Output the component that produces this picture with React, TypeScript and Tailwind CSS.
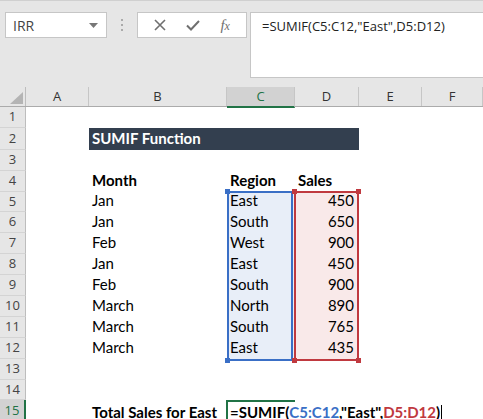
import React from "react";

const COLS = [63, 138, 68, 64, 63, 61];
const LETTERS = ["A", "B", "C", "D", "E", "F"];
const ROWH = [21, 22, 21, 21, 20, 21, 21, 21, 21, 21, 21, 21, 21, 20, 24];

const data: [string, string, string][] = [
  ["Jan", "East", "450"],
  ["Jan", "South", "650"],
  ["Feb", "West", "900"],
  ["Jan", "East", "450"],
  ["Feb", "South", "900"],
  ["March", "North", "890"],
  ["March", "South", "765"],
  ["March", "East", "435"],
];

const cellFont = { fontFamily: "Lato, 'Liberation Sans', sans-serif" };
const uiFont = { fontFamily: "'Open Sans', 'Noto Sans', sans-serif" };

function Row({ n, children }: { n: number; children?: React.ReactNode }) {
  const sel = n === 15;
  return (
    <div className="flex" style={{ height: ROWH[n - 1] }}>
      <div
        className={
          "w-[26px] shrink-0 flex items-center justify-center text-[13px] border-b border-[#d4d4d4] " +
          (sel
            ? "bg-[#d2d2d2] text-[#217346] border-r-2 border-r-[#217346] items-start pt-[1px]"
            : "bg-[#e6e6e6] text-[#444] border-r border-r-[#bdbdbd]")
        }
        style={uiFont}
      >
        {n}
      </div>
      <div className="flex-1 flex relative">{children}</div>
    </div>
  );
}

function Cell({
  w,
  children,
  className = "",
}: {
  w: number;
  children?: React.ReactNode;
  className?: string;
}) {
  return (
    <div
      className={"shrink-0 flex items-end pb-[1px] px-[3px] text-[15px] text-black whitespace-nowrap " + className}
      style={{ width: w, ...cellFont }}
    >
      {children}
    </div>
  );
}

export default function App() {
  return (
    <div className="w-[483px] h-[419px] overflow-hidden bg-white relative">
      {/* Toolbar */}
      <div className="h-[87px] bg-[#e6e6e6] border-t border-[#d0d0d0] flex items-start pt-[11px]">
        <div
          className="ml-[5px] w-[102px] h-[26px] bg-white border border-[#c6c6c6] flex items-center justify-between pl-[7px] pr-[8px] text-[14px] text-[#444]"
          style={uiFont}
        >
          <span>IRR</span>
          <svg width="9" height="5" viewBox="0 0 9 5">
            <path d="M0 0 L9 0 L4.5 5 Z" fill="#777" />
          </svg>
        </div>
        <div className="w-[30px] h-[26px] flex flex-col items-center justify-center gap-[3px]">
          <div className="w-[2px] h-[2px] bg-[#aaa]" />
          <div className="w-[2px] h-[2px] bg-[#aaa]" />
          <div className="w-[2px] h-[2px] bg-[#aaa]" />
        </div>
        <div className="w-[110px] h-[26px] bg-white border border-[#c6c6c6] flex items-center justify-around px-[6px]">
          <svg width="12" height="12" viewBox="0 0 12 12">
            <path d="M1 1 L11 11 M11 1 L1 11" stroke="#6f6f6f" strokeWidth="1.6" />
          </svg>
          <svg width="14" height="11" viewBox="0 0 14 11">
            <path d="M1 5.5 L5 9.5 L13 1" stroke="#6f6f6f" strokeWidth="2" fill="none" />
          </svg>
          <span
            className="text-[15px] italic text-[#6f6f6f] leading-none"
            style={{ fontFamily: "'Liberation Serif', serif" }}
          >
            f<span className="text-[12px]">x</span>
          </span>
        </div>
        <div
          className="ml-[3px] flex-1 h-[66px] bg-white border border-[#c6c6c6] border-r-0 pl-[11px] pt-[4px] text-[13px] text-[#222]"
          style={uiFont}
        >
          =SUMIF(C5:C12,"East",D5:D12)
        </div>
      </div>

      {/* Column headers */}
      <div className="flex h-[20px] bg-[#e6e6e6] border-b border-[#ababab]">
        <div className="w-[26px] shrink-0 relative border-r border-[#bdbdbd]">
          <svg className="absolute left-[10px] top-[5px]" width="13" height="12" viewBox="0 0 13 12">
            <path d="M13 0 L13 12 L0 12 Z" fill="#b4b4b4" />
          </svg>
        </div>
        {LETTERS.map((l, i) => (
          <div
            key={l}
            className={
              "shrink-0 flex items-center justify-center text-[13px] border-r border-[#c6c6c6] " +
              (l === "C"
                ? "bg-[#d2d2d2] text-[#217346] border-b-2 border-b-[#217346] h-[21px]"
                : "text-[#333]")
            }
            style={{ width: COLS[i], ...uiFont }}
          >
            {l}
          </div>
        ))}
      </div>

      {/* Grid rows */}
      <div className="relative">
        <Row n={1} />
        <Row n={2}>
          <Cell w={COLS[0]} />
          <Cell
            w={COLS[1] + COLS[2] + COLS[3]}
            className="bg-[#333f4f] !text-white font-bold items-center pb-0"
          >
            SUMIF Function
          </Cell>
        </Row>
        <Row n={3} />
        <Row n={4}>
          <Cell w={COLS[0]} />
          <Cell w={COLS[1]} className="font-bold">Month</Cell>
          <Cell w={COLS[2]} className="font-bold">Region</Cell>
          <Cell w={COLS[3]} className="font-bold">Sales</Cell>
        </Row>
        {data.map(([m, r, s], i) => (
          <Row n={i + 5} key={i}>
            <Cell w={COLS[0]} />
            <Cell w={COLS[1]}>{m}</Cell>
            <Cell w={COLS[2]} className="bg-[#e8eef8]">{r}</Cell>
            <Cell w={COLS[3]} className="bg-[#f9e9e9] justify-end pr-[5px]">{s}</Cell>
          </Row>
        ))}
        <Row n={13} />
        <Row n={14} />
        <Row n={15}>
          <Cell w={COLS[0]} />
          <Cell w={COLS[1]} className="font-bold">Total Sales for East</Cell>
          <div
            className="shrink-0 flex items-end pb-[1px] pl-[2px] text-[15px] font-bold whitespace-nowrap border-t-2 border-l-2 border-[#217346] w-[69px] ml-[-1px] overflow-visible"
            style={cellFont}
          >
            <span className="flex items-end">
              <span>=SUMIF(</span>
              <span className="text-[#3a6fc6]">C5:C12</span>
              <span>,"East",</span>
              <span className="text-[#c0393f]">D5:D12</span>
              <span>)</span>
              <span className="inline-block w-[1px] h-[17px] bg-black ml-[1px] mb-[1px]" />
            </span>
          </div>
        </Row>

        {/* Range highlight borders */}
        <div className="absolute left-[227px] top-[84px] w-[66px] h-[170px] border-2 border-[#3a6fc6] pointer-events-none" />
        <div className="absolute left-[294px] top-[84px] w-[65px] h-[170px] border-2 border-[#c0393f] pointer-events-none" />
        <div className="absolute left-[225px] top-[82px] w-[5px] h-[5px] bg-[#3a6fc6]" />
        <div className="absolute left-[225px] top-[251px] w-[5px] h-[5px] bg-[#3a6fc6]" />
        <div className="absolute left-[292px] top-[82px] w-[5px] h-[5px] bg-[#c0393f]" />
        <div className="absolute left-[292px] top-[251px] w-[5px] h-[5px] bg-[#c0393f]" />
        <div className="absolute left-[356px] top-[82px] w-[5px] h-[5px] bg-[#c0393f]" />
        <div className="absolute left-[356px] top-[251px] w-[5px] h-[5px] bg-[#c0393f]" />
      </div>
    </div>
  );
}
